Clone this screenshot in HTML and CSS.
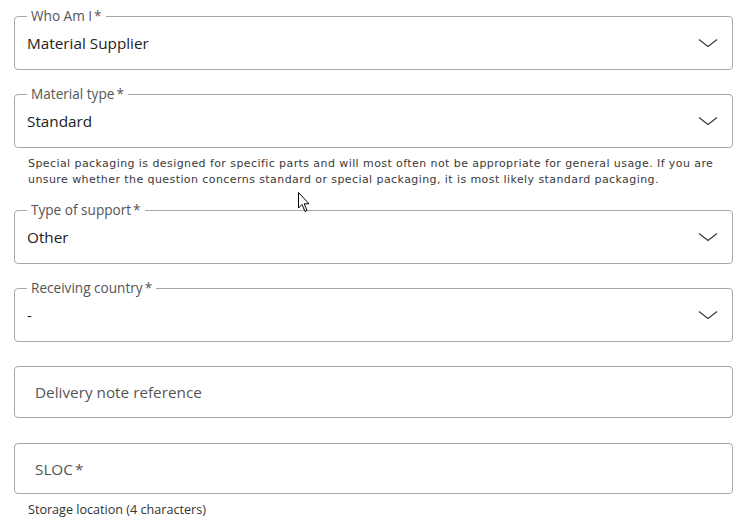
FILE: index.html
```html
<!DOCTYPE html>
<html lang="en">
<head>
  <meta charset="UTF-8">
  <meta name="viewport" content="width=device-width, initial-scale=1.0">
  <title>Support Request</title>
  <link rel="stylesheet" href="styles.css">
</head>
<body>

<div class="form">
  <fieldset class="field">
    <legend>Who Am I<span class="req">*</span></legend>
    <div class="select">
      <span>Material Supplier</span>
      <svg class="chevron" width="20" height="10" viewBox="0 0 20 10"><path d="M1 1.5 L10 8.5 L19 1.5"/></svg>
    </div>
  </fieldset>

  <fieldset class="field">
    <legend>Material type<span class="req">*</span></legend>
    <div class="select">
      <span>Standard</span>
      <svg class="chevron" width="20" height="10" viewBox="0 0 20 10"><path d="M1 1.5 L10 8.5 L19 1.5"/></svg>
    </div>
  </fieldset>
  <p class="help help-wide">Special packaging is designed for specific parts and will most often not be appropriate for general usage. If you are unsure whether the question concerns standard or special packaging, it is most likely standard packaging.</p>

  <fieldset class="field">
    <legend>Type of support<span class="req">*</span></legend>
    <div class="select">
      <span>Other</span>
      <svg class="chevron" width="20" height="10" viewBox="0 0 20 10"><path d="M1 1.5 L10 8.5 L19 1.5"/></svg>
    </div>
  </fieldset>

  <fieldset class="field">
    <legend>Receiving country<span class="req">*</span></legend>
    <div class="select">
      <span>-</span>
      <svg class="chevron" width="20" height="10" viewBox="0 0 20 10"><path d="M1 1.5 L10 8.5 L19 1.5"/></svg>
    </div>
  </fieldset>

  <div class="text-input first">Delivery note reference</div>

  <div class="text-input last">SLOC<span class="req">*</span></div>
  <p class="help help-sloc">Storage location (4 characters)</p>
</div>

<svg class="cursor" width="14" height="22" viewBox="0 0 14 22">
  <path d="M0.5 0.5 L0.5 16 L4 12.5 L7 19.5 L9 18.5 L6.2 11.8 L11 11.8 Z"/>
</svg>

</body>
</html>
```

FILE: styles.css
```css
body {
  margin: 0;
  font-family: "Open Sans", Arial, sans-serif;
  color: #222;
  background: #fff;
}
.form {
  padding: 8px 16px 0 14px;
}
.field {
  margin: 0 0 16px 0;
  padding: 0 14px 0 12px;
  border: 1px solid #a8a8a8;
  border-radius: 4px;
}
.field legend {
  padding: 0 4px;
  font-size: 13.6px;
  line-height: 16px;
  color: #555;
}
.req {
  margin-left: 2px;
}
.select {
  display: flex;
  align-items: center;
  justify-content: space-between;
  height: 45px;
  padding-bottom: 8px;
  box-sizing: border-box;
  font-size: 15.3px;
  color: #222;
}
.chevron path {
  fill: none;
  stroke: #333;
  stroke-width: 1.1;
}
.help {
  margin: 0;
  padding-left: 14px;
  font-size: 12.6px;
  line-height: 16px;
  color: #333;
}
.help-wide {
  margin: -8px 0 14px 0;
  padding-right: 4px;
  font-family: "DejaVu Sans", sans-serif;
  font-size: 11px;
  letter-spacing: 0.42px;
  color: #3a3a3a;
}
.text-input {
  display: flex;
  align-items: center;
  height: 52px;
  box-sizing: border-box;
  padding: 0 20px;
  border: 1px solid #a8a8a8;
  border-radius: 4px;
  font-size: 15.3px;
  color: #555;
  margin-bottom: 25px;
}
.text-input.first {
  margin-top: 24px;
}
.text-input.last {
  height: 51px;
  margin-bottom: 0;
}
.help-sloc {
  margin-top: 8px;
}
.cursor {
  position: absolute;
  left: 298px;
  top: 192px;
}
.cursor path {
  fill: #fff;
  stroke: #000;
  stroke-width: 1;
}
```
